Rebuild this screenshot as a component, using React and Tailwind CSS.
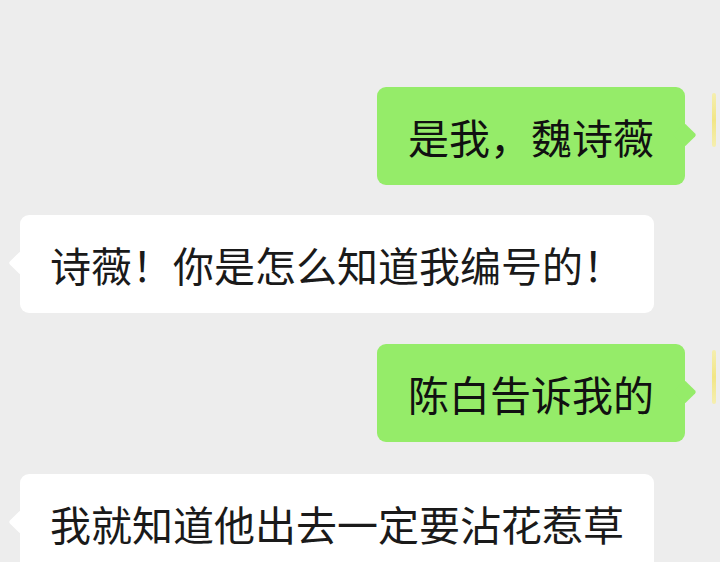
const cjk = { fontFamily: '"Noto Sans CJK SC", "Noto Sans", sans-serif' }

// outgoing message: green bubble on the right, tail pointing right
const MineBubble = ({ text, className = '' }) => (
  <div className={`flex justify-end items-start pr-[4px] ${className}`}>
    <div className="relative rounded-[9px] bg-[#95ec69] px-[31px] py-[21px] text-[41px] leading-[56px] text-[#111]">
      <span className="absolute right-[-8px] top-[48px] h-[17px] w-[17px] -translate-y-1/2 rotate-45 rounded-[2px] bg-[#95ec69]" />
      <span className="relative whitespace-nowrap">{text}</span>
    </div>
    {/* edge of the avatar peeking in on the right */}
    <div className="ml-[27px] mt-[6px] h-[54px] w-[4px] rounded-full bg-gradient-to-b from-[#f7efa0] via-[#f3e46a] to-[#f7efa0] opacity-80" />
  </div>
)

// incoming message: white bubble on the left, tail pointing left
const TheirBubble = ({ text, className = '' }) => (
  <div className={`flex justify-start pl-[20px] ${className}`}>
    <div className="relative rounded-[9px] bg-white px-[30px] py-[21px] text-[41px] leading-[56px] text-[#1a1a1a]">
      <span className="absolute left-[-8px] top-[48px] h-[17px] w-[17px] -translate-y-1/2 rotate-45 rounded-[2px] bg-white" />
      <span className="relative whitespace-nowrap">{text}</span>
    </div>
  </div>
)

const App = () => {
  return (
    <div className="h-[562px] w-[720px] overflow-hidden bg-[#ededed] pt-[87px]" style={cjk}>
      <MineBubble text="是我，魏诗薇" />
      <TheirBubble text="诗薇！你是怎么知道我编号的！" className="mt-[30px]" />
      <MineBubble text="陈白告诉我的" className="mt-[31px]" />
      <TheirBubble text="我就知道他出去一定要沾花惹草" className="mt-[32px]" />
    </div>
  )
}

export default App
